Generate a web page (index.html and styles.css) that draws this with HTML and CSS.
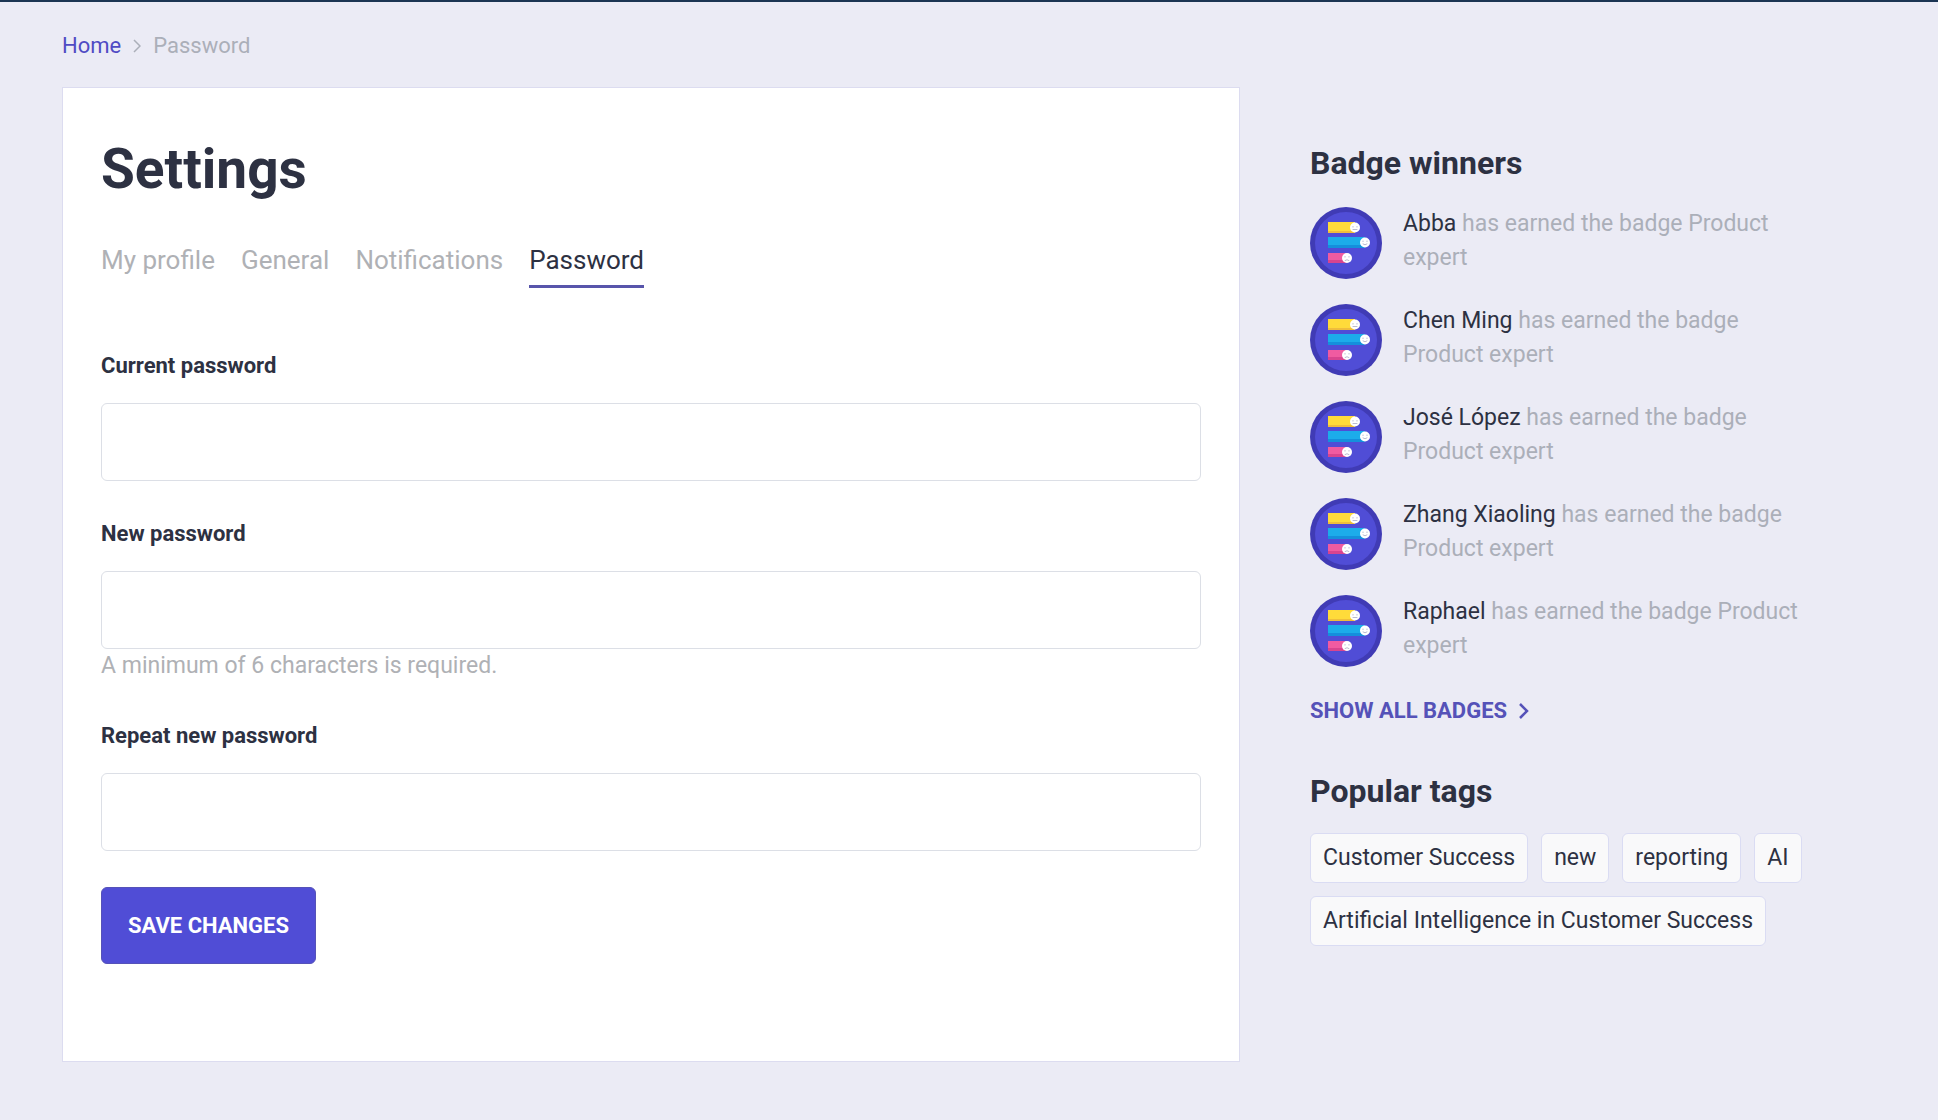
FILE: index.html
```html
<!DOCTYPE html>
<html lang="en">

<head>
    <meta charset="UTF-8">
    <meta name="viewport" content="width=device-width, initial-scale=1.0">
    <title>Settings - Password</title>

    <link rel="stylesheet" href="styles.css">
</head>

<body>
    <!-- badge artwork, reused by every winner -->
    <svg class="sprite" aria-hidden="true">
        <symbol id="badge" viewBox="0 0 72 72">
            <circle cx="36" cy="36" r="36" fill="#403bb5" />
            <circle cx="36" cy="36" r="31" fill="#504dd6" />
            <path fill="#ffdb3a" d="M18 15h27v11H18z" />
            <path fill="#efbd3c" d="M18 24h27v2H18z" />
            <path fill="#1cacea" d="M18 30h37v11H18z" />
            <path fill="#158fdc" d="M18 38h37v3H18z" />
            <path fill="#f05ba1" d="M18 46h19v10H18z" />
            <path fill="#d8448f" d="M18 53h19v3H18z" />
            <g fill="#fff">
                <circle cx="45" cy="20.500" r="5" />
                <circle cx="55" cy="35.500" r="5" />
                <circle cx="37" cy="51" r="5" />
            </g>
            <g fill="none" stroke="#a9a9c4" stroke-width=".8" stroke-linecap="round">
                <path d="M43 19.500v.6M47 19.500v.6M43 22.500h4" />
                <path d="M53 34v.6M57 34v.6M53 37q2 1.800 4 0" />
                <path d="M35 49.500v.6M39 49.500v.6M35 53.500q2-1.800 4 0" />
            </g>
        </symbol>
    </svg>

    <div class="page">
        <nav class="breadcrumb" aria-label="Breadcrumb">
            <a href="#">Home</a>
            <svg class="breadcrumb-arrow" viewBox="0 0 8 14" aria-hidden="true">
                <path d="M1 1l6 6-6 6" />
            </svg>
            <span>Password</span>
        </nav>

        <div class="columns">
            <main class="card">
                <h1 class="title">Settings</h1>

                <nav class="tabs" aria-label="Settings">
                    <a class="tab" href="#">My profile</a>
                    <a class="tab" href="#">General</a>
                    <a class="tab" href="#">Notifications</a>
                    <a class="tab is-active" href="#" aria-current="page">Password</a>
                </nav>

                <form class="form">
                    <div class="field">
                        <label class="label" for="current-password">Current password</label>
                        <input class="input" type="password" id="current-password">
                    </div>
                    <div class="field">
                        <label class="label" for="new-password">New password</label>
                        <input class="input" type="password" id="new-password" aria-describedby="password-help">
                        <p class="help" id="password-help">A minimum of 6 characters is required.</p>
                    </div>
                    <div class="field">
                        <label class="label" for="repeat-password">Repeat new password</label>
                        <input class="input" type="password" id="repeat-password">
                    </div>
                    <button class="button" type="submit">SAVE CHANGES</button>
                </form>
            </main>

            <aside class="sidebar">
                <section>
                    <h2 class="heading">Badge winners</h2>
                    <ul class="winners">
                        <li class="winner">
                            <svg class="badge" aria-hidden="true"><use href="#badge" /></svg>
                            <p class="winner-text"><a href="#">Abba</a> has earned the badge Product expert</p>
                        </li>
                        <li class="winner">
                            <svg class="badge" aria-hidden="true"><use href="#badge" /></svg>
                            <p class="winner-text"><a href="#">Chen Ming</a> has earned the badge Product expert</p>
                        </li>
                        <li class="winner">
                            <svg class="badge" aria-hidden="true"><use href="#badge" /></svg>
                            <p class="winner-text"><a href="#">José López</a> has earned the badge Product expert</p>
                        </li>
                        <li class="winner">
                            <svg class="badge" aria-hidden="true"><use href="#badge" /></svg>
                            <p class="winner-text"><a href="#">Zhang Xiaoling</a> has earned the badge Product expert</p>
                        </li>
                        <li class="winner">
                            <svg class="badge" aria-hidden="true"><use href="#badge" /></svg>
                            <p class="winner-text"><a href="#">Raphael</a> has earned the badge Product expert</p>
                        </li>
                    </ul>
                    <a class="show-all" href="#">
                        SHOW ALL BADGES
                        <svg class="show-all-arrow" viewBox="0 0 10 16" aria-hidden="true">
                            <path d="M1 1l7 7-7 7" />
                        </svg>
                    </a>
                </section>

                <section class="popular">
                    <h2 class="heading">Popular tags</h2>
                    <div class="tags">
                        <a class="tag" href="#">Customer Success</a>
                        <a class="tag" href="#">new</a>
                        <a class="tag" href="#">reporting</a>
                        <a class="tag" href="#">AI</a>
                        <a class="tag" href="#">Artificial Intelligence in Customer Success</a>
                    </div>
                </section>
            </aside>
        </div>
    </div>
</body>

</html>
```
FILE: styles.css
```css
* {
    box-sizing: border-box;
}

body {
    margin: 0;
    border-top: 2px solid #1b3553;
    background: #ebebf5;
    color: #2d3142;
    font: 23px/34px Roboto, sans-serif;
}

h1,
h2,
p,
ul {
    margin: 0;
    padding: 0;
}

a {
    color: inherit;
    text-decoration: none;
}

.sprite {
    display: none;
}

.page {
    padding: 27px 128px 58px 62px;
}

.breadcrumb {
    display: flex;
    align-items: center;
    gap: 12px;
    margin-bottom: 24px;
    color: #abafb9;
    font-size: 22px;
}

.breadcrumb a {
    color: #504bc4;
}

.breadcrumb-arrow {
    width: 8px;
    height: 14px;
    fill: none;
    stroke: #abafb9;
    stroke-width: 1.5;
}

.columns {
    display: grid;
    grid-template-columns: minmax(0, 1fr) 500px;
    gap: 70px;
    align-items: start;
}

/* Settings card */

.card {
    padding: 48px 38px 97px;
    border: 1px solid #dcdcf0;
    background: #fff;
}

.title {
    font-size: 55px;
    line-height: 66px;
}

.tabs {
    display: flex;
    gap: 26px;
    margin-top: 41px;
    color: #afb1b5;
    font-size: 26px;
}

.tab {
    padding-bottom: 8px;
    border-bottom: 3px solid transparent;
}

.tab.is-active {
    border-color: #5855ab;
    color: #2d3142;
}

.form {
    display: flex;
    flex-direction: column;
    align-items: flex-start;
    gap: 36px;
    margin-top: 61px;
}

.field {
    width: 100%;
}

.label {
    display: block;
    margin-bottom: 20px;
    font-size: 22px;
    font-weight: bold;
}

.input {
    display: block;
    width: 100%;
    height: 78px;
    padding: 0 20px;
    border: 1px solid #dcdfe6;
    border-radius: 6px;
    background: #fff;
    font: inherit;
}

.help {
    color: #afb1b5;
}

.button {
    height: 77px;
    padding: 0 26px;
    border: 1px solid #5552b8;
    border-radius: 6px;
    background: #504dd6;
    color: #fff;
    font: inherit;
    font-size: 22px;
    font-weight: bold;
}

/* Sidebar */

.sidebar {
    padding-top: 56px;
}

.heading {
    font-size: 32px;
    line-height: 40px;
}

.winners {
    display: flex;
    flex-direction: column;
    gap: 25px;
    margin: 24px 0 27px;
    list-style: none;
}

.winner {
    display: flex;
    gap: 21px;
}

.badge {
    flex: none;
    width: 72px;
    height: 72px;
}

.winner-text {
    color: #abafb9;
}

.winner-text a {
    color: #2d3142;
}

.show-all {
    display: inline-flex;
    align-items: center;
    gap: 12px;
    color: #5552b8;
    font-size: 22px;
    font-weight: bold;
}

.show-all-arrow {
    width: 10px;
    height: 16px;
    fill: none;
    stroke: #5552b8;
    stroke-width: 2.5;
}

.popular {
    margin-top: 43px;
}

.tags {
    display: flex;
    flex-wrap: wrap;
    gap: 13px;
    margin-top: 22px;
}

.tag {
    padding: 7px 12px;
    border: 1px solid #dadcf3;
    border-radius: 6px;
    background: #f9f9fa;
}
```
